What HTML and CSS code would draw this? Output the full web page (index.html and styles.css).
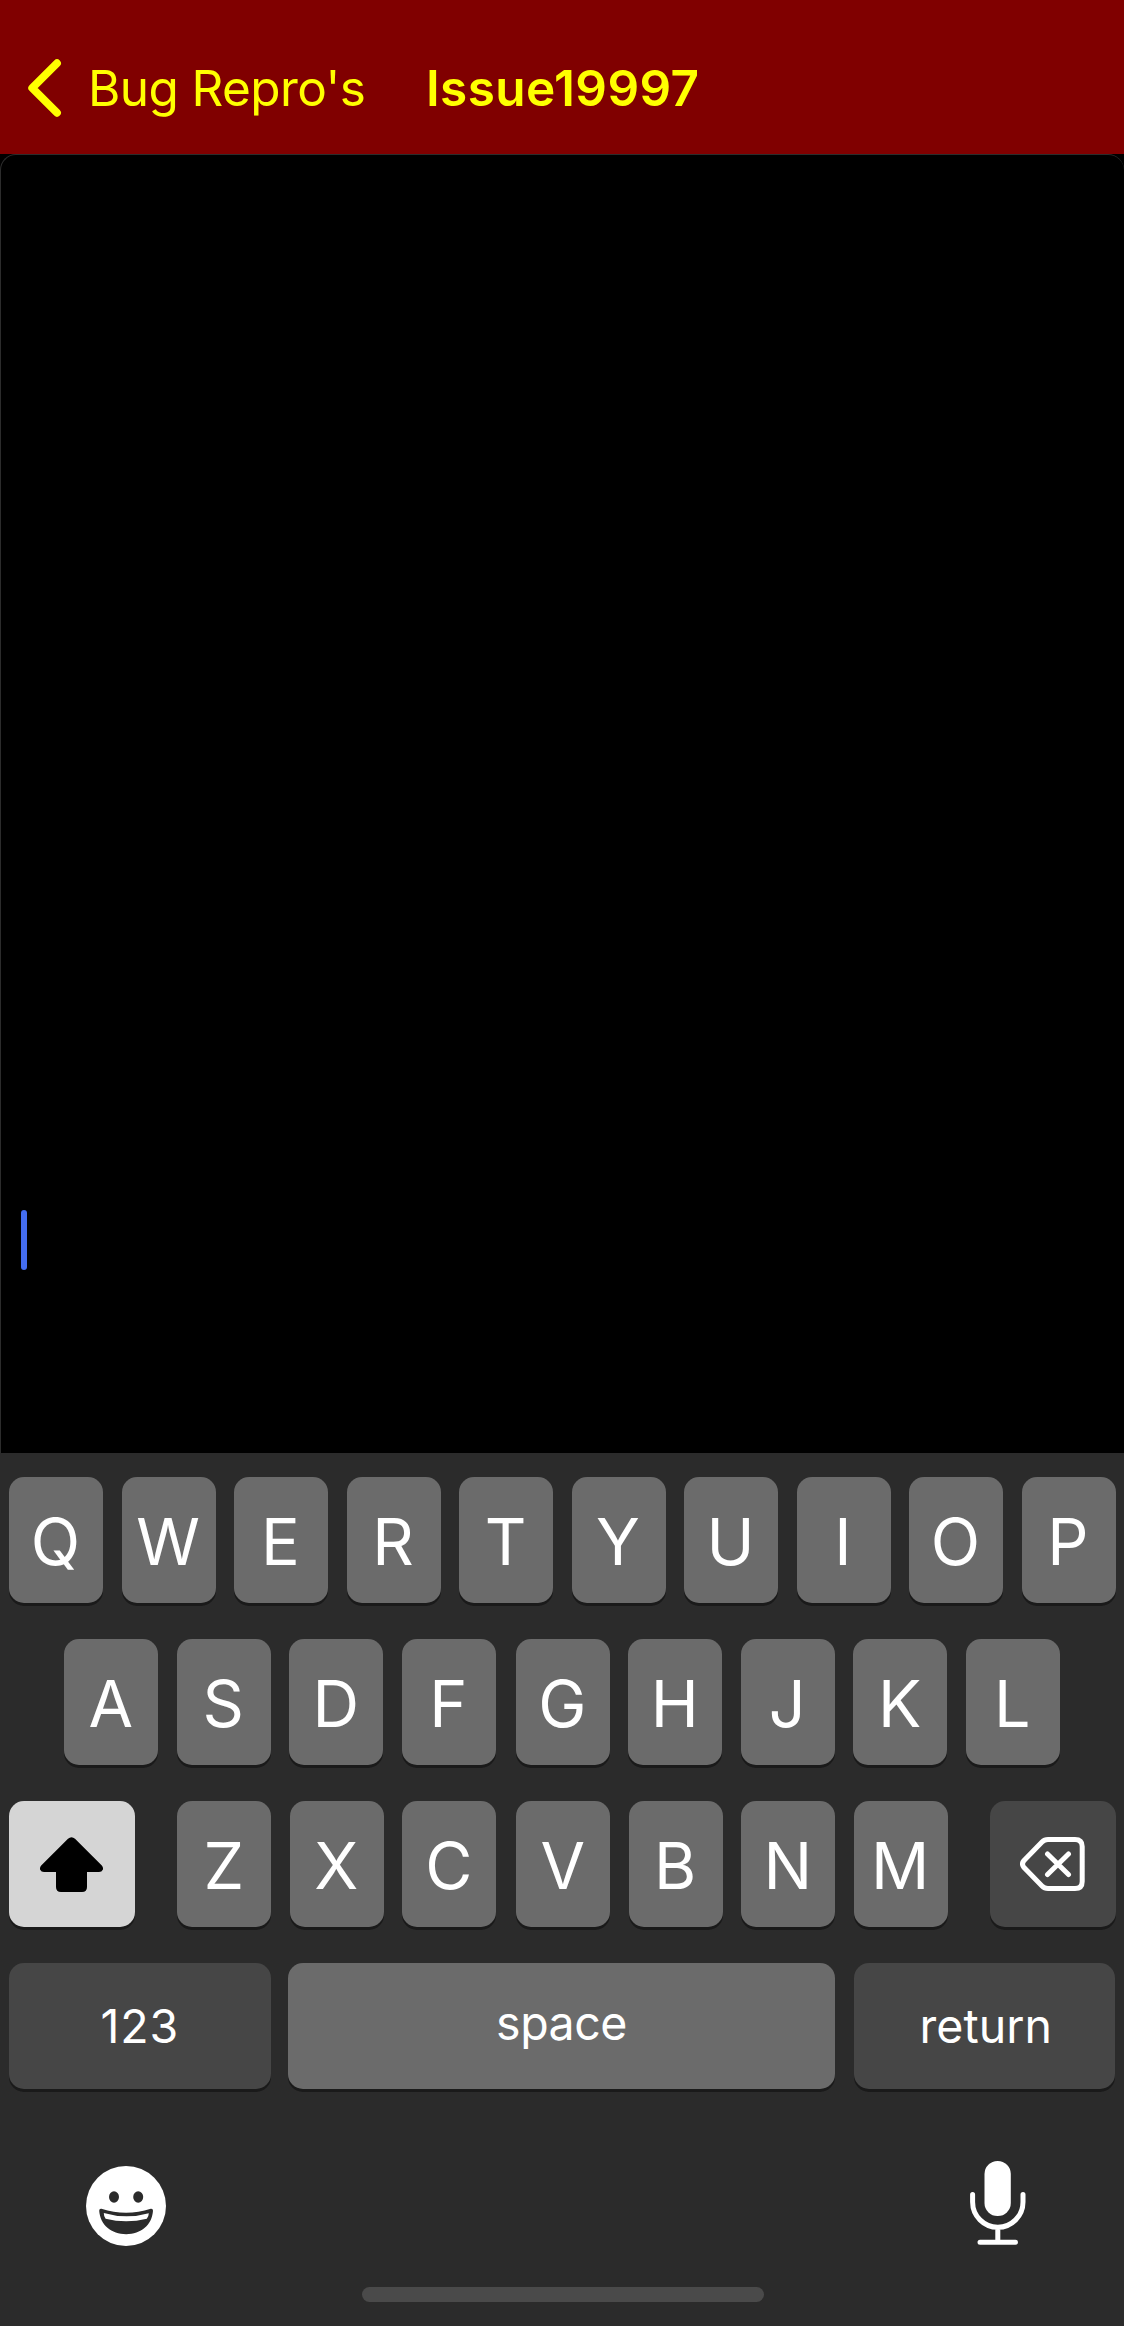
FILE: index.html
```html
<!DOCTYPE html>
<html lang="en">
<head>
<meta charset="utf-8">
<title>Issue19997</title>
<link rel="stylesheet" href="styles.css">
</head>
<body>
<div class="screen">
  <header class="nav">
    <svg class="nav-chevron" width="36" height="60" viewBox="0 0 36 60"><path d="M31 5.2 6.2 30 31 54.8"/></svg>
    <span class="nav-back">Bug Repro's</span>
    <h1 class="nav-title">Issue19997</h1>
  </header>

  <main class="content">
    <div class="editor"><div class="caret"></div></div>
  </main>

  <section class="keyboard">
    <div class="row">
      <div class="key">Q</div><div class="key">W</div><div class="key">E</div><div class="key">R</div><div class="key">T</div><div class="key">Y</div><div class="key">U</div><div class="key">I</div><div class="key">O</div><div class="key">P</div>
    </div>
    <div class="row row-home">
      <div class="key">A</div><div class="key">S</div><div class="key">D</div><div class="key">F</div><div class="key key-middle">G</div><div class="key">H</div><div class="key">J</div><div class="key">K</div><div class="key">L</div>
    </div>
    <div class="row row-bottom">
      <div class="key key-square key-shift">
        <svg width="63" height="55" viewBox="0 0 63 55"><path d="M28 1.8Q31.5-1.2 35 1.8L61.8 28.5Q63.6 30.6 62.8 32.8 61.8 35 59 35H47V50Q47 55 42 55H21Q16 55 16 50V35H4Q1.2 35 .2 32.8-.6 30.6 1.2 28.5Z"/></svg>
      </div>
      <div class="letters">
        <div class="key">Z</div><div class="key">X</div><div class="key">C</div><div class="key key-middle">V</div><div class="key">B</div><div class="key">N</div><div class="key">M</div>
      </div>
      <div class="key key-square key-dark key-delete">
        <svg width="65" height="54" viewBox="0 0 65 54"><path d="M28 2.5H55Q62.2 2.5 62.2 9.5V44.5Q62.2 51.5 55 51.5H28Q24.5 51.5 22 49L4 30.5Q1 27 4 23.5L22 5Q24.5 2.5 28 2.5ZM27.5 17 48.5 37.5M48.5 17 27.5 37.5"/></svg>
      </div>
    </div>
    <div class="row row-actions">
      <div class="key key-dark key-wide key-123">123</div>
      <div class="key key-space">space</div>
      <div class="key key-dark key-wide key-return">return</div>
    </div>
    <div class="tools">
      <svg width="80" height="80" viewBox="0 0 80 80">
        <circle cx="40" cy="40" r="40" fill="#fff"/>
        <ellipse cx="28" cy="31" rx="5" ry="5.7" fill="#2b2b2b"/>
        <ellipse cx="52.2" cy="31" rx="5" ry="5.7" fill="#2b2b2b"/>
        <path d="M15.4 42.7Q40 50.7 64.8 42.7 67 42.3 67 44.8C66 59 55 68.2 40.2 68.2S14.2 59 13.2 44.8Q13.2 42.3 15.4 42.7Z" fill="#2b2b2b"/>
        <path d="M17.8 47Q40.2 53.6 62.8 47.2 62.8 50 60.8 52.8 40.2 57.8 19.6 52.8 17.7 50 17.8 47Z" fill="#fff"/>
      </svg>
      <svg width="56" height="84" viewBox="0 0 56 84" fill="none" stroke="#fff" stroke-width="5" stroke-linecap="round">
        <rect x="14.5" y="0" width="26.3" height="55" rx="13.1" fill="#fff" stroke="none"/>
        <path d="M2.6 33.6V41A25.2 25.3 0 0 0 53 41V33.6M27.8 66.3V81.3M10 81.3H45.5"/>
      </svg>
    </div>
    <div class="home-indicator"></div>
  </section>
</div>
</body>
</html>
```
FILE: styles.css
```css
* { box-sizing: border-box; }

body {
  margin: 0;
  background: #000;
  font-family: Inter, "Liberation Sans", sans-serif;
}

.screen {
  display: flex;
  flex-direction: column;
  width: 1124px;
  height: 2326px;
}

.nav {
  display: flex;
  align-items: center;
  height: 154px;
  padding: 22px 0 0 26px;
  background: #800000;
  color: #ff0;
  font-size: 49.5px;
  line-height: 60px;
  white-space: nowrap;
}

.nav-chevron {
  fill: none;
  stroke: #ff0;
  stroke-width: 7.8px;
  stroke-linecap: round;
  stroke-linejoin: round;
}

.nav-back {
  width: 338px;
  padding-left: 26px;
  letter-spacing: -0.6px;
}

.nav-title {
  margin: 0 0 0 26px;
  font-size: 49.5px;
  font-weight: 600;
  letter-spacing: 0.4px;
}

.content {
  display: flex;
  height: 1299px;
}

.editor {
  flex: 1;
  padding: 1055px 0 0 20px;
  border: 1px solid #2c2c2c;
  border-bottom: 0;
  border-right: 0;
  border-radius: 16px 16px 0 0;
}

.caret {
  width: 6px;
  height: 60px;
  border-radius: 3px;
  background: #446df0;
}

.keyboard {
  display: flex;
  flex-direction: column;
  gap: 36px;
  height: 873px;
  padding: 24px 8px 0 9px;
  background: #2b2b2b;
}

.row, .letters {
  display: flex;
  gap: 18.5px;
}

.row { height: 126px; }
.row-home { padding-left: 55.3px; }
.row-bottom { justify-content: space-between; gap: 0; }

.key {
  display: flex;
  align-items: center;
  justify-content: center;
  flex: none;
  width: 94px;
  height: 126px;
  padding: 5px 1px 0 0;
  border-radius: 15px;
  background: #6b6b6b;
  box-shadow: 0 3px 0 #1a1a1a;
  color: #fff;
  font-size: 64.6px;
  line-height: 1;
}

.key-middle { margin-left: 1.5px; }
.key-square { width: 126px; padding: 0 2px 0 0; }
.key-dark { background: #464646; }
.key-shift { background: #d5d5d5; fill: #000; }

.key-delete {
  fill: none;
  stroke: #fff;
  stroke-width: 5px;
  stroke-linecap: round;
  stroke-linejoin: round;
}

.row-actions { gap: 18px; }
.row-actions .key { font-size: 46.5px; padding: 0; }
.row-actions .key-wide { width: 261.5px; }
.row-actions .key-123 { letter-spacing: 0.8px; }
.row-actions .key-return { padding-left: 3px; }

.row-actions .key-space {
  width: 547px;
  margin: 0 0.5px 0 -0.5px;
  padding-bottom: 6px;
  letter-spacing: -0.5px;
}

.tools {
  display: flex;
  justify-content: space-between;
  height: 90px;
  padding: 0 90px 0 77px;
}

.tools svg { margin-top: 36px; }
.tools svg:first-child { margin-top: 41px; }

.home-indicator {
  width: 402px;
  height: 15px;
  margin: 36px auto 0;
  border-radius: 8px;
  background: #4a4a4a;
}
```
